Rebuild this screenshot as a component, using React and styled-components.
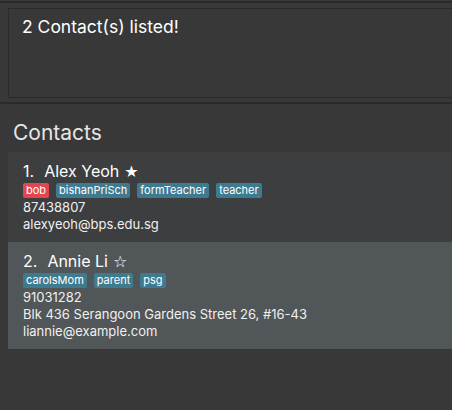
import React from 'react';
import styled, { createGlobalStyle } from 'styled-components';

const contacts = [
  {
    name: 'Alex Yeoh',
    starred: true,
    tags: [{ label: 'bob', tone: 'red' }, { label: 'bishanPriSch' }, { label: 'formTeacher' }, { label: 'teacher' }],
    lines: ['87438807', 'alexyeoh@bps.edu.sg'],
  },
  {
    name: 'Annie Li',
    starred: false,
    tags: [{ label: 'carolsMom' }, { label: 'parent' }, { label: 'psg' }],
    lines: ['91031282', 'Blk 436 Serangoon Gardens Street 26, #16-43', 'liannie@example.com'],
  },
];

const App = () => {
  return (
    <>
      <GlobalStyle />
      <Window>
        <Separator $top />
        <ResultPane>
          <ResultBox>2 Contact(s) listed!</ResultBox>
        </ResultPane>
        <Separator />
        <ListPanel>
          <Heading>Contacts</Heading>
          <List>
            {contacts.map((c, i) => (
              <Card key={c.name} $odd={i % 2 === 1}>
                <NameRow>
                  <Index>{i + 1}.</Index>
                  <Name>{c.name}</Name>
                  <Star>{c.starred ? '★' : '☆'}</Star>
                </NameRow>
                <Tags>
                  {c.tags.map((t) => (
                    <Tag key={t.label} $tone={t.tone}>{t.label}</Tag>
                  ))}
                </Tags>
                {c.lines.map((l) => (
                  <Detail key={l}>{l}</Detail>
                ))}
              </Card>
            ))}
          </List>
        </ListPanel>
      </Window>
    </>
  );
};

const GlobalStyle = createGlobalStyle`
  html, body {
    margin: 0;
    padding: 0;
    background: #383838;
  }
  body {
    font-family: Inter, "Liberation Sans", sans-serif;
    color: #ffffff;
  }
`;

const Window = styled.div`
  width: 452px;
  height: 410px;
  overflow: hidden;
  background: #383838;
  display: flex;
  flex-direction: column;
`;

const Separator = styled.div`
  height: 2px;
  margin-top: ${(p) => (p.$top ? '1px' : '0')};
  background: #2a2a2a;
  flex-shrink: 0;
`;

const ResultPane = styled.div`
  padding: 5px 0 4px 8px;
`;

const ResultBox = styled.div`
  height: 81px;
  box-sizing: content-box;
  border: 1px solid #2a2a2a;
  border-right: none;
  padding: 7px 13px 0;
  font-size: 17.5px;
  line-height: 21px;
  color: #ffffff;
`;

const ListPanel = styled.div`
  padding: 16px 0 0 8px;
`;

const Heading = styled.div`
  font-size: 21px;
  line-height: 26px;
  color: #e6e6e6;
  padding-left: 5px;
  margin-bottom: 6px;
`;

const List = styled.div`
  display: flex;
  flex-direction: column;
`;

const Card = styled.div`
  background: ${(p) => (p.$odd ? '#515658' : '#3c3e3f')};
  padding: 9px 15px 9px;
  display: flex;
  flex-direction: column;
`;

const NameRow = styled.div`
  display: flex;
  align-items: baseline;
  font-size: 16px;
  line-height: 20px;
  color: #ffffff;
`;

const Index = styled.span`
  margin-right: 10px;
`;

const Name = styled.span`
  margin-right: 5px;
`;

const Star = styled.span`
  font-family: "DejaVu Sans", sans-serif;
  font-size: 16px;
`;

const Tags = styled.div`
  display: flex;
  gap: 7px;
  margin: 1px 0 1px;
`;

const Tag = styled.span`
  background: ${(p) => (p.$tone === 'red' ? '#e3474d' : '#3e7b91')};
  color: #ffffff;
  font-size: 11px;
  line-height: 13px;
  padding: 1px 3px;
  border-radius: 2px;
`;

const Detail = styled.div`
  font-size: 13px;
  line-height: 17px;
  color: #f0f0f0;
`;

export default App;
